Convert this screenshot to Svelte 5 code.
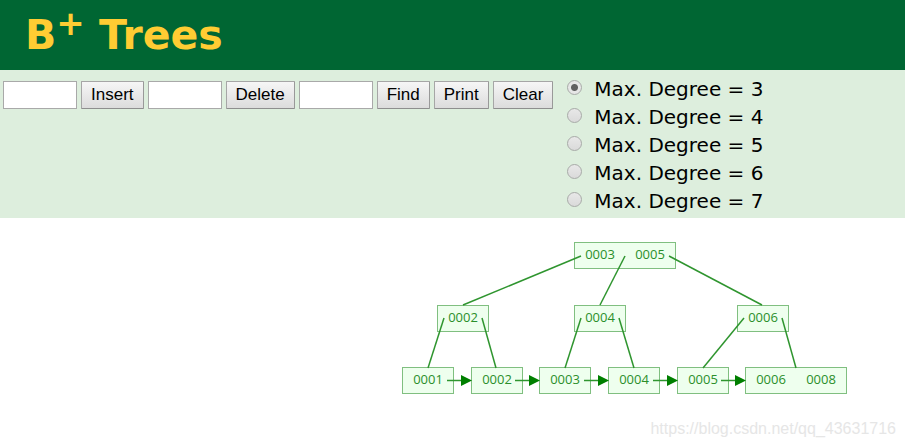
<script>
  const degrees = [3, 4, 5, 6, 7];
  let degree = $state(3);
  let insertValue = $state('');
  let deleteValue = $state('');
  let findValue = $state('');

  const narrow = 52;
  const wide = 102;
  const nodeHeight = 26;

  const nodes = [
    { x: 174, y: 1, w: wide, keys: [['0003', 26], ['0005', 76]] },
    { x: 37, y: 64, w: narrow, keys: [['0002', 26]] },
    { x: 174, y: 64, w: narrow, keys: [['0004', 26]] },
    { x: 337, y: 64, w: narrow, keys: [['0006', 26]] },
    { x: 2, y: 126, w: narrow, keys: [['0001', 26]] },
    { x: 71, y: 126, w: narrow, keys: [['0002', 26]] },
    { x: 139, y: 126, w: narrow, keys: [['0003', 26]] },
    { x: 208, y: 126, w: narrow, keys: [['0004', 26]] },
    { x: 277, y: 126, w: narrow, keys: [['0005', 26]] },
    { x: 345, y: 126, w: wide, keys: [['0006', 26], ['0008', 76]] }
  ];

  const edges = [
    [181, 15, 63, 64],
    [225, 15, 200, 64],
    [269, 15, 362, 64],
    [44, 77, 28, 127],
    [82, 77, 96, 127],
    [181, 77, 165, 127],
    [219, 77, 234, 127],
    [344, 77, 303, 127],
    [382, 77, 396, 127]
  ];

  const links = [47, 115, 184, 253, 321];
</script>

<div class="page">
  <header>
    <h1>B<sup>+</sup> Trees</h1>
  </header>

  <form class="controls" onsubmit={(e) => e.preventDefault()}>
    <div class="actions">
      <input type="text" aria-label="Value to insert" bind:value={insertValue} />
      <button type="button">Insert</button>
      <input type="text" aria-label="Value to delete" bind:value={deleteValue} />
      <button type="button">Delete</button>
      <input type="text" aria-label="Value to find" bind:value={findValue} />
      <button type="button">Find</button>
      <button type="button">Print</button>
      <button type="button">Clear</button>
    </div>
    <div class="degrees" role="radiogroup" aria-label="Max. Degree">
      {#each degrees as d}
        <label>
          <input type="radio" name="degree" value={d} bind:group={degree} />
          <span>Max. Degree = {d}</span>
        </label>
      {/each}
    </div>
  </form>

  <main>
    <svg width="448" height="154" viewBox="0 0 448 154" role="img" aria-label="B+ tree">
      {#each nodes as n}
        <rect x={n.x + 0.5} y={n.y + 0.5} width={n.w - 1} height={nodeHeight} />
        {#each n.keys as [key, dx]}
          <text x={n.x + dx} y={n.y + 17}>{key}</text>
        {/each}
      {/each}
      {#each edges as [x1, y1, x2, y2]}
        <line {x1} {y1} {x2} {y2} />
      {/each}
      {#each links as x}
        <line x1={x} y1="139.5" x2={x + 16} y2="139.5" />
        <path d="M{x + 14} 134 L{x + 25} 139.5 L{x + 14} 145 Z" />
      {/each}
    </svg>
    <p class="credit">https://blog.csdn.net/qq_43631716</p>
  </main>
</div>

<style>
  :global(body) {
    margin: 0;
    background: #fff;
  }
  .page {
    display: flex;
    flex-direction: column;
    min-height: 100vh;
    font-family: Verdana, 'DejaVu Sans', sans-serif;
    color: #000;
  }
  header {
    display: flex;
    align-items: center;
    height: 70px;
    padding: 0 25px;
    background: #006633;
  }
  h1 {
    margin: 0;
    font-size: 41px;
    line-height: 50px;
    font-weight: bold;
    color: #ffcc33;
  }
  sup {
    font-size: 34px;
    line-height: 0;
    vertical-align: 14px;
  }
  .controls {
    display: flex;
    align-items: flex-start;
    gap: 14px;
    padding: 5px 3px 3px;
    background: #ddeedd;
  }
  .actions {
    display: flex;
    gap: 4px;
    padding-top: 6px;
  }
  .actions input,
  .actions button {
    box-sizing: border-box;
    height: 28px;
    margin: 0;
    border: 1px solid #a9a9a9;
    font: 17px/24px 'Liberation Sans', Arial, sans-serif;
  }
  .actions input {
    width: 74px;
    padding: 1px 2px;
    background: #fff;
  }
  .actions button {
    padding: 0 9px;
    border-color: #a6a6a6 #999 #8e8e8e #a6a6a6;
    border-radius: 1px;
    background: linear-gradient(#f6f6f6, #dcdcdc);
    color: #000;
  }
  .degrees {
    display: flex;
    flex-direction: column;
  }
  label {
    display: flex;
    align-items: center;
    gap: 12px;
    height: 28px;
    font-size: 20px;
    line-height: 28px;
    white-space: nowrap;
  }
  label input {
    appearance: none;
    box-sizing: border-box;
    width: 15px;
    height: 15px;
    margin: 0 0 3px;
    border: 1px solid #a8aaa8;
    border-radius: 50%;
    background: linear-gradient(#e8e8e8, #dadada);
  }
  label input:checked {
    background: radial-gradient(circle, #606060 3px, #e6e6e6 4px);
  }
  main {
    position: relative;
    flex: 1;
    padding: 23px 0 0 400px;
  }
  svg {
    display: block;
  }
  rect {
    fill: #eeffee;
    stroke: #80bf80;
  }
  text {
    font: 13px 'Open Sans', 'Noto Sans', sans-serif;
    fill: #2b8f2b;
    text-anchor: middle;
  }
  line {
    stroke: #2f952f;
    stroke-width: 1.5;
  }
  path {
    fill: #007f00;
  }
  .credit {
    position: absolute;
    right: 9px;
    bottom: 8px;
    margin: 0;
    font: 16px/20px 'Liberation Sans', Arial, sans-serif;
    color: #e6e6e6;
  }
</style>
